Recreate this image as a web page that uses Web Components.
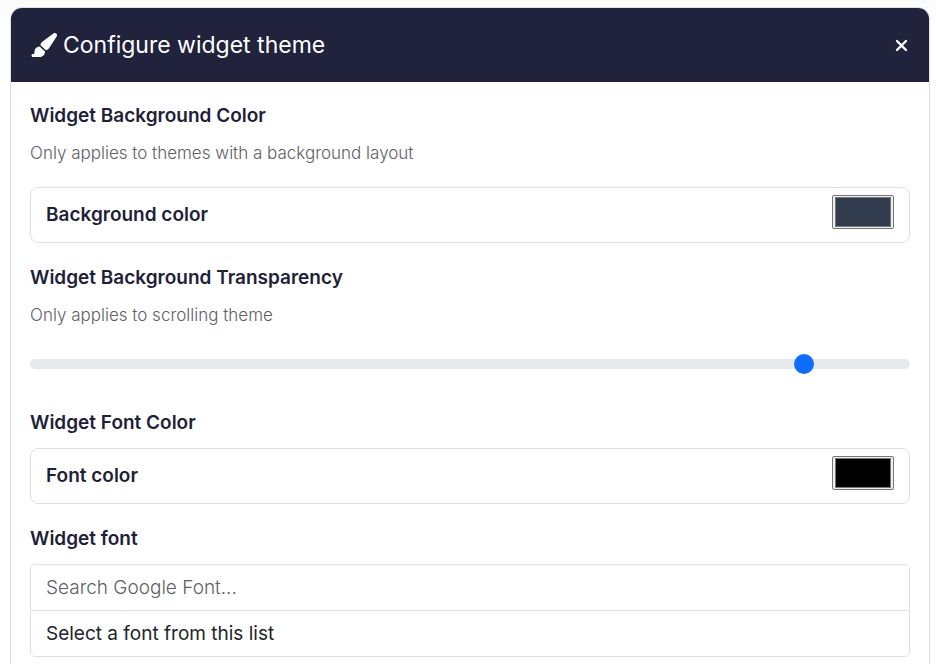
<!DOCTYPE html>
<html lang="en">
<head>
<meta charset="utf-8">
<title>Configure widget theme</title>
<style>
body {
  margin: 0;
  padding: 7px 6px 0 10px;
  background: linear-gradient(#fafafa, #ffffff 24px);
  font-family: Inter, "Open Sans", sans-serif;
  --ink: #1e1f38;
  --header: #21223b;
  --line: #dfdfe4;
  --muted: #5c6167;
}
</style>
</head>
<body>
<theme-card>
  <span slot="title">Configure widget theme</span>
  <field-group heading="Widget Background Color" hint="Only applies to themes with a background layout">
    <color-field label="Background color" value="#313c4e"></color-field>
  </field-group>
  <field-group heading="Widget Background Transparency" hint="Only applies to scrolling theme">
    <range-field label="Widget background transparency" min="0.1" max="1" step="0.1" value="0.9"></range-field>
  </field-group>
  <field-group heading="Widget Font Color">
    <color-field label="Font color" value="#000000"></color-field>
  </field-group>
  <field-group heading="Widget font">
    <font-picker></font-picker>
  </field-group>
</theme-card>

<template id="theme-card">
  <style>
    :host { display: block; background: #fff; border: 1px solid #dee0e4; border-bottom: 0; border-radius: 12px 12px 0 0; }
    header { display: flex; align-items: center; justify-content: space-between; gap: 16px; padding: 21px 20px 21px 19px; background: var(--header); color: #fff; border-radius: 11px 11px 0 0; }
    h1 { display: flex; align-items: center; gap: 6px; margin: 0; font-size: 23px; font-weight: 400; line-height: 32px; }
    h1 svg { width: 27px; height: 24px; flex: none; }
    button { display: flex; margin: 0; padding: 0; border: 0; background: none; color: inherit; cursor: pointer; }
    button svg { width: 14px; height: 14px; }
    main { display: flex; flex-direction: column; gap: 23px; padding: 22px 19px 24px; }
  </style>
  <header>
    <h1>
      <svg viewBox="0 0 576 512" fill="currentColor" aria-hidden="true">
        <path d="M339.3 367.1c27.3-3.9 51.9-19.4 67.2-42.9L568.2 74.1c12.6-19.5 9.4-45.3-7.6-61.2S517.7-4.4 499.1 9.6L262.4 187.2c-24 18-38.2 46.1-38.4 76.100L339.3 367.100zm-19.600 25.400l-116-104.400C143.900 290.300 96 339.600 96 400c0 3.900 .2 7.800 .6 11.600C98.400 429.100 86.400 448 68.800 448L64 448c-17.700 0-32 14.300-32 32s14.300 32 32 32l144 0c61.900 0 112-50.100 112-112c0-2.500-.1-5-.2-7.500z"/>
      </svg>
      <slot name="title"></slot>
    </h1>
    <button type="button" aria-label="Close">
      <svg viewBox="0 0 14 14" fill="none" stroke="currentColor" stroke-width="2.400" stroke-linecap="round"><path d="M2 3 11 12M11 3 2 12"/></svg>
    </button>
  </header>
  <main><slot></slot></main>
</template>

<template id="field-group">
  <style>
    :host { display: block; }
    h2 { margin: 0 0 13px; color: var(--ink); font-size: 19px; font-weight: 600; line-height: 24px; }
    p { margin: 0 0 22px; color: var(--muted); font-size: 17px; font-weight: 300; line-height: 24px; }
  </style>
  <h2></h2>
  <p></p>
  <slot></slot>
</template>

<template id="color-field">
  <style>
    :host { display: flex; align-items: flex-start; justify-content: space-between; padding: 7px 15px; border: 1px solid var(--line); border-radius: 8px; }
    label { color: var(--ink); font-size: 19px; font-weight: 600; line-height: 40px; }
    input { box-sizing: border-box; width: 62px; height: 34px; margin: 0; padding: 1px 2px; border: 1px solid #767676; border-radius: 2px; background: #efefef; }
    input::-webkit-color-swatch-wrapper { padding: 0; }
    input::-webkit-color-swatch { border: 1px solid #777; }
  </style>
  <label for="color"></label>
  <input id="color" type="color">
</template>

<template id="range-field">
  <style>
    :host { display: block; padding: 5px 0 14px; }
    input { appearance: none; display: block; width: 100%; height: 20px; margin: 0; background: none; }
    input::-webkit-slider-runnable-track { height: 10px; border-radius: 5px; background: #e7eaed; }
    input::-webkit-slider-thumb { appearance: none; width: 20px; height: 20px; margin-top: -5px; border: 0; border-radius: 50%; background: #0d6efd; }
  </style>
  <input type="range">
</template>

<template id="font-picker">
  <style>
    :host { display: block; border: 1px solid var(--line); border-radius: 5px; overflow: hidden; }
    input, select { appearance: none; display: block; box-sizing: border-box; width: 100%; height: 45px; margin: 0; padding: 0 15px; border: 0; border-radius: 0; background: #fff; color: #212529; font-family: inherit; font-size: 19px; font-weight: 300; line-height: 24px; }
    select { height: 46px; border-top: 1px solid var(--line); font-weight: 400; }
    input::placeholder { color: var(--muted); opacity: 1; }
  </style>
  <input type="text" placeholder="Search Google Font..." aria-label="Search Google Font">
  <select aria-label="Widget font"><option>Select a font from this list</option></select>
</template>

<script>
class TemplateElement extends HTMLElement {
  constructor() {
    super();
    const template = document.getElementById(this.localName);
    this.attachShadow({ mode: "open" }).append(template.content.cloneNode(true));
  }
  part$(selector) { return this.shadowRoot.querySelector(selector); }
}

customElements.define("theme-card", class extends TemplateElement {});

customElements.define("field-group", class extends TemplateElement {
  connectedCallback() {
    this.part$("h2").textContent = this.getAttribute("heading");
    const hint = this.part$("p");
    hint.textContent = this.getAttribute("hint");
    hint.hidden = !this.hasAttribute("hint");
  }
});

customElements.define("color-field", class extends TemplateElement {
  connectedCallback() {
    this.part$("label").textContent = this.getAttribute("label");
    this.part$("input").value = this.getAttribute("value");
  }
});

customElements.define("range-field", class extends TemplateElement {
  connectedCallback() {
    const input = this.part$("input");
    for (const name of ["min", "max", "step", "value"]) input.setAttribute(name, this.getAttribute(name));
    input.setAttribute("aria-label", this.getAttribute("label"));
  }
});

customElements.define("font-picker", class extends TemplateElement {});
</script>
</body>
</html>
